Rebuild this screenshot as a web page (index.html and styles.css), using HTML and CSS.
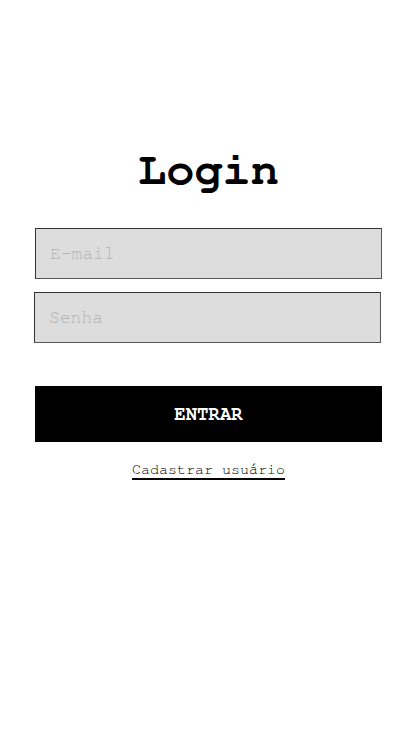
FILE: index.html
```html
<!DOCTYPE html>
<html lang="pt-BR">
<head>
<meta charset="utf-8">
<title>Login</title>
<link rel="stylesheet" href="styles.css">
</head>
<body>
<main class="page">
  <h1 class="title">Login</h1>
  <form class="form">
    <input class="field" type="email" placeholder="E-mail">
    <input class="field field-shift" type="password" placeholder="Senha">
    <button class="btn" type="button">ENTRAR</button>
  </form>
  <a class="link" href="#">Cadastrar usuário</a>
</main>
</body>
</html>
```

FILE: styles.css
```css
* { box-sizing: border-box; }
html, body { margin: 0; padding: 0; background: #fff; }
body { font-family: "FreeMono", "Liberation Mono", monospace; color: #000; }
.page {
  display: flex;
  flex-direction: column;
  align-items: center;
  padding: 143px 36px 0 35px;
}
.title {
  margin: 0;
  font-size: 47px;
  font-weight: bold;
  line-height: 54px;
}
.form {
  width: 347px;
  display: flex;
  flex-direction: column;
  margin-top: 31px;
}
.field {
  height: 51px;
  width: 347px;
  background: #dddddd;
  border: 1px solid #333;
  border-right-color: #555;
  border-bottom-color: #555;
  padding: 0 14px;
  font-family: inherit;
  font-size: 18px;
  color: #000;
  outline: none;
}
.field::placeholder { color: #b4b4b4; }
.field + .field { margin-top: 13px; }
.field-shift { margin-left: -1px; }
.btn {
  margin-top: 43px;
  height: 56px;
  width: 347px;
  background: #000;
  color: #fff;
  border: 0;
  font-family: inherit;
  font-weight: bold;
  font-size: 19px;
  cursor: pointer;
}
.link {
  margin-top: 20px;
  font-size: 15px;
  color: #000;
  text-decoration: none;
  border-bottom: 2px solid #000;
  line-height: 16px;
}
```
